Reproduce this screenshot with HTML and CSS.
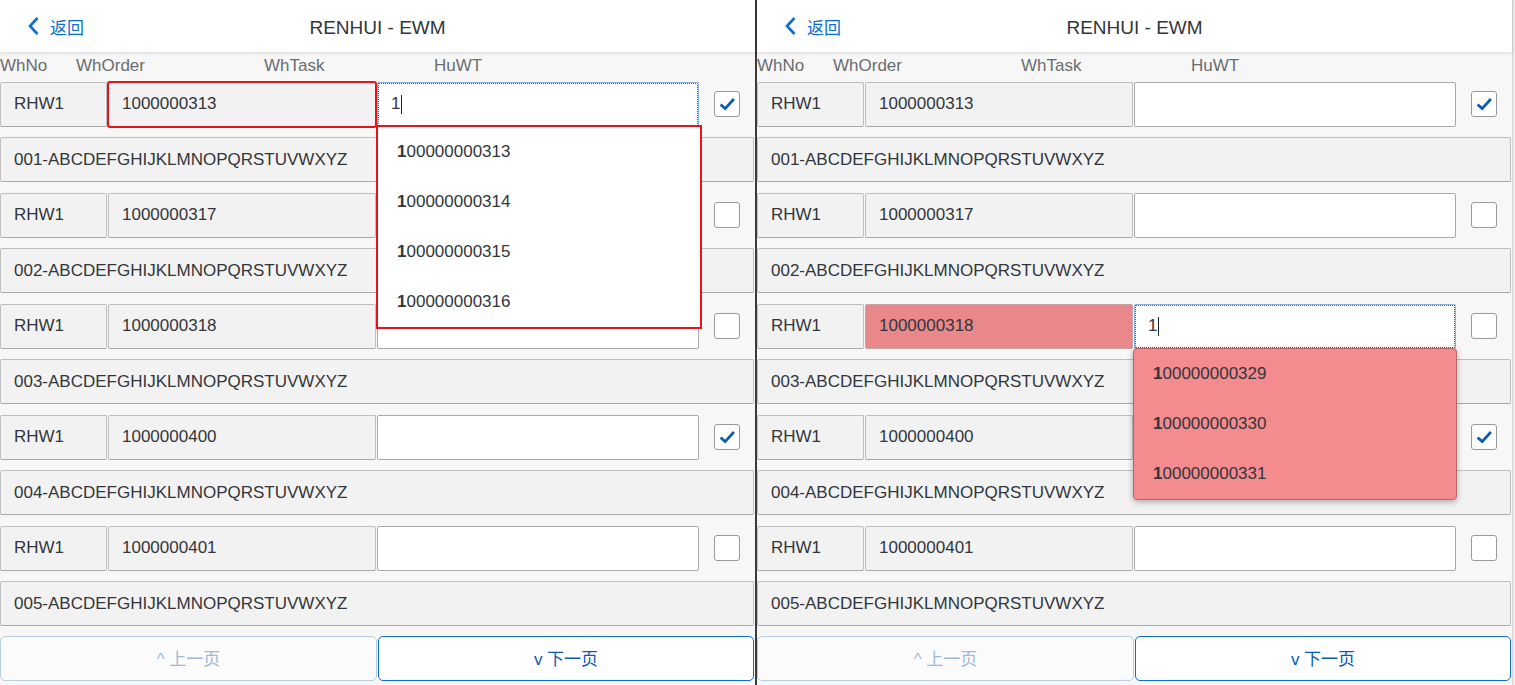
FILE: index.html
```html
<!DOCTYPE html>
<html lang="zh-CN">
<head>
    <meta charset="UTF-8">
    <meta name="viewport" content="width=device-width, initial-scale=1.0">
    <title>RENHUI - EWM</title>
    <link rel="stylesheet" href="styles.css">
</head>
<body>
<div class="screens">

    <!-- left screen: WhTask suggest open on first row -->
    <section class="screen">
        <header class="header">
            <a class="back">
                <svg width="13" height="20" viewBox="0 0 13 20"><path d="M10.5 2 L3 10 L10.5 18" fill="none" stroke="#0a6ed1" stroke-width="2.6"/></svg>
                <span>返回</span>
            </a>
            <div class="title">RENHUI - EWM</div>
            <div></div>
        </header>
        <div class="labels">
            <span class="l-no">WhNo</span>
            <span class="l-order">WhOrder</span>
            <span class="l-task">WhTask</span>
            <span>HuWT</span>
        </div>
        <div class="list">
            <div class="row">
                <div class="field">RHW1</div>
                <div class="field marked">1000000313</div>
                <div class="field input focus">1<span class="caret"></span>
                    <ul class="suggest red">
                        <li><b>1</b>00000000313</li>
                        <li><b>1</b>00000000314</li>
                        <li><b>1</b>00000000315</li>
                        <li><b>1</b>00000000316</li>
                    </ul>
                </div>
                <div class="check"><svg width="22" height="22" viewBox="0 0 24 24"><path d="M5 12.5 L10 17 L19.5 6.5" fill="none" stroke="#0a5bb0" stroke-width="3"/></svg></div>
            </div>
            <div class="field desc">001-ABCDEFGHIJKLMNOPQRSTUVWXYZ</div>
            <div class="row">
                <div class="field">RHW1</div>
                <div class="field">1000000317</div>
                <div class="field input"></div>
                <div class="check"></div>
            </div>
            <div class="field desc">002-ABCDEFGHIJKLMNOPQRSTUVWXYZ</div>
            <div class="row">
                <div class="field">RHW1</div>
                <div class="field">1000000318</div>
                <div class="field input"></div>
                <div class="check"></div>
            </div>
            <div class="field desc">003-ABCDEFGHIJKLMNOPQRSTUVWXYZ</div>
            <div class="row">
                <div class="field">RHW1</div>
                <div class="field">1000000400</div>
                <div class="field input"></div>
                <div class="check"><svg width="22" height="22" viewBox="0 0 24 24"><path d="M5 12.5 L10 17 L19.5 6.5" fill="none" stroke="#0a5bb0" stroke-width="3"/></svg></div>
            </div>
            <div class="field desc">004-ABCDEFGHIJKLMNOPQRSTUVWXYZ</div>
            <div class="row">
                <div class="field">RHW1</div>
                <div class="field">1000000401</div>
                <div class="field input"></div>
                <div class="check"></div>
            </div>
            <div class="field desc">005-ABCDEFGHIJKLMNOPQRSTUVWXYZ</div>
        </div>
        <div class="pager">
            <button class="btn disabled">^ 上一页</button>
            <button class="btn">v 下一页</button>
        </div>
    </section>

    <div class="divider"></div>

    <!-- right screen: suggest on 1000000318 -->
    <section class="screen">
        <header class="header">
            <a class="back">
                <svg width="13" height="20" viewBox="0 0 13 20"><path d="M10.5 2 L3 10 L10.5 18" fill="none" stroke="#0a6ed1" stroke-width="2.6"/></svg>
                <span>返回</span>
            </a>
            <div class="title">RENHUI - EWM</div>
            <div></div>
        </header>
        <div class="labels">
            <span class="l-no">WhNo</span>
            <span class="l-order">WhOrder</span>
            <span class="l-task">WhTask</span>
            <span>HuWT</span>
        </div>
        <div class="list">
            <div class="row">
                <div class="field">RHW1</div>
                <div class="field">1000000313</div>
                <div class="field input"></div>
                <div class="check"><svg width="22" height="22" viewBox="0 0 24 24"><path d="M5 12.5 L10 17 L19.5 6.5" fill="none" stroke="#0a5bb0" stroke-width="3"/></svg></div>
            </div>
            <div class="field desc">001-ABCDEFGHIJKLMNOPQRSTUVWXYZ</div>
            <div class="row">
                <div class="field">RHW1</div>
                <div class="field">1000000317</div>
                <div class="field input"></div>
                <div class="check"></div>
            </div>
            <div class="field desc">002-ABCDEFGHIJKLMNOPQRSTUVWXYZ</div>
            <div class="row">
                <div class="field">RHW1</div>
                <div class="field warn">1000000318</div>
                <div class="field input focus">1<span class="caret"></span>
                    <ul class="suggest pink">
                        <li><b>1</b>00000000329</li>
                        <li><b>1</b>00000000330</li>
                        <li><b>1</b>00000000331</li>
                    </ul>
                </div>
                <div class="check"></div>
            </div>
            <div class="field desc">003-ABCDEFGHIJKLMNOPQRSTUVWXYZ</div>
            <div class="row">
                <div class="field">RHW1</div>
                <div class="field">1000000400</div>
                <div class="field input"></div>
                <div class="check"><svg width="22" height="22" viewBox="0 0 24 24"><path d="M5 12.5 L10 17 L19.5 6.5" fill="none" stroke="#0a5bb0" stroke-width="3"/></svg></div>
            </div>
            <div class="field desc">004-ABCDEFGHIJKLMNOPQRSTUVWXYZ</div>
            <div class="row">
                <div class="field">RHW1</div>
                <div class="field">1000000401</div>
                <div class="field input"></div>
                <div class="check"></div>
            </div>
            <div class="field desc">005-ABCDEFGHIJKLMNOPQRSTUVWXYZ</div>
        </div>
        <div class="pager">
            <button class="btn disabled">^ 上一页</button>
            <button class="btn">v 下一页</button>
        </div>
    </section>

    <div class="edge"></div>
</div>
</body>
</html>
```

FILE: styles.css
```css
body {
    margin: 0;
    font-family: "Liberation Sans", Arial, "Noto Sans CJK SC", sans-serif;
    font-size: 17px;
    color: #32363a;
    background: #f7f7f7;
}
.screens {
    display: flex;
    height: 685px;
    overflow: hidden;
}
.screen {
    width: 755px;
    flex: none;
    display: flex;
    flex-direction: column;
}
.divider {
    width: 2px;
    flex: none;
    background: #3b3b3b;
}
.edge {
    flex: 1;
    background: #ececec;
    border-left: 1px solid #d4d4d4;
}

/* header bar */
.header {
    height: 52px;
    background: #fff;
    box-shadow: 0 1px 4px rgba(0, 0, 0, 0.12);
    display: grid;
    grid-template-columns: 1fr auto 1fr;
    align-items: center;
    position: relative;
    z-index: 1;
}
.back {
    display: flex;
    align-items: center;
    gap: 10px;
    padding-left: 27px;
    color: #0a6ed1;
    font-size: 17px;
}
.title {
    font-size: 19px;
    padding-top: 3px;
}

/* column captions */
.labels {
    display: flex;
    height: 29.5px;
    box-sizing: border-box;
    padding-top: 4px;
    line-height: 20px;
    color: #6a6d70;
}
.l-no { width: 76px; }
.l-order { width: 188px; }
.l-task { width: 170px; }

.list {
    display: flex;
    flex-direction: column;
    gap: 10.5px;
}
.row {
    height: 45px;
    display: grid;
    grid-template-columns: 107px 268px 322px 1fr;
    gap: 1px;
}
.field {
    box-sizing: border-box;
    height: 45px;
    border: 1px solid #bfbfbf;
    border-bottom-color: #a9a9a9;
    border-radius: 2px;
    background: #f2f2f2;
    padding: 0 13px;
    display: flex;
    align-items: center;
    white-space: nowrap;
}
.desc {
    margin-right: 1px;
}
.input {
    background: #fff;
    border-color: #a9a9a9;
    position: relative;
}
.input.focus {
    border-color: #8db2da;
    outline: 1px dotted #5a5a5a;
    outline-offset: -2px;
}
.caret {
    display: inline-block;
    width: 1px;
    height: 19px;
    margin-left: 1px;
    background: #222;
}
.marked {
    outline: 2px solid #e3141c;
    outline-offset: -1px;
}
.warn {
    background: #e8888a;
    border-color: #c7a3a4;
}
.check {
    align-self: center;
    justify-self: center;
    width: 26px;
    height: 26px;
    margin-right: 1px;
    box-sizing: border-box;
    border: 1px solid #9a9a9a;
    border-radius: 3px;
    background: #fff;
    display: flex;
    align-items: center;
    justify-content: center;
}

/* suggestion popups */
.suggest {
    position: absolute;
    left: -2px;
    right: -2px;
    top: 100%;
    margin: 0;
    padding: 0;
    list-style: none;
    z-index: 5;
}
.suggest li {
    height: 50px;
    padding-left: 19px;
    display: flex;
    align-items: center;
}
.suggest b {
    font-weight: bold;
}
.suggest.red {
    top: calc(100% - 1px);
    right: -4px;
    background: #fff;
    border: 2px solid #e3141c;
}
.suggest.pink {
    background: #f48b8e;
    border: 1px solid #b66769;
    border-radius: 4px;
    box-shadow: 0 2px 6px rgba(0, 0, 0, 0.3);
}

/* paging buttons */
.pager {
    display: grid;
    grid-template-columns: 377px 376px;
    gap: 1px;
    margin-top: 10px;
}
.btn {
    height: 45px;
    box-sizing: border-box;
    border: 1px solid #0a6ed1;
    border-radius: 5px;
    background: #fff;
    color: #0a5bb0;
    font-family: "Liberation Sans", "Noto Sans CJK SC", sans-serif;
    font-size: 17px;
    padding-bottom: 4px;
    display: flex;
    align-items: center;
    justify-content: center;
}
.btn.disabled {
    border-color: #b7cee6;
    color: #9fbad8;
    background: #fbfbfb;
}
```
